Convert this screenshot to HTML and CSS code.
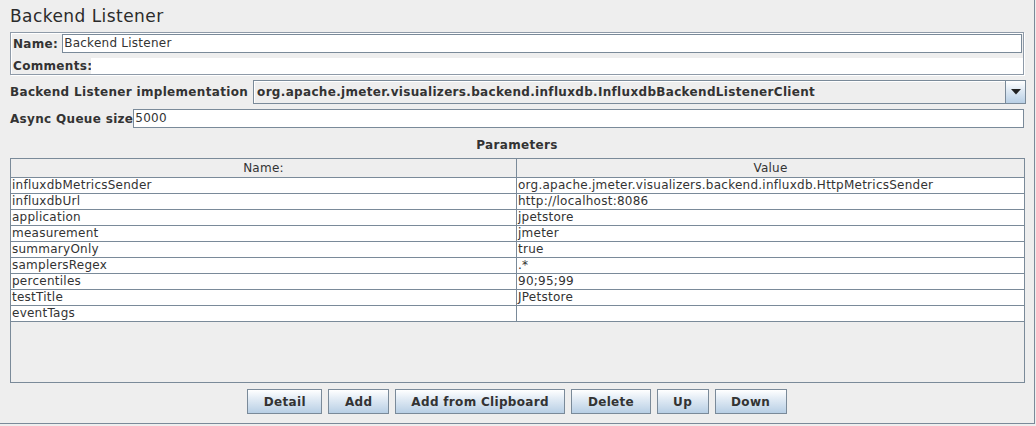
FILE: index.html
```html
<!DOCTYPE html>
<html>
<head>
<meta charset="utf-8">
<link rel="stylesheet" href="styles.css">
</head>
<body>
<div class="frame">
  <div class="title">Backend Listener</div>
  <div class="namepanel">
    <div class="nrow">
      <span class="lbl">Name:</span>
      <div class="field">Backend Listener</div>
    </div>
    <div class="crow">
      <span class="lbl">Comments:</span>
      <div class="area"></div>
    </div>
  </div>
  <div class="implrow">
    <span class="lbl">Backend Listener implementation</span>
    <div class="combo">
      <span class="combo-text">org.apache.jmeter.visualizers.backend.influxdb.InfluxdbBackendListenerClient</span>
      <div class="combo-btn">
        <svg width="10" height="6" viewBox="0 0 10 6"><path d="M0 0H10L5 5.5Z" fill="#222"/></svg>
      </div>
    </div>
  </div>
  <div class="qrow">
    <span class="lbl">Async Queue size</span>
    <div class="field">5000</div>
  </div>
  <div class="params">Parameters</div>
  <div class="tbl">
    <div class="thead">
      <div class="c1">Name:</div>
      <div class="c2">Value</div>
    </div>
    <div class="tr"><div class="c1">influxdbMetricsSender</div><div class="c2">org.apache.jmeter.visualizers.backend.influxdb.HttpMetricsSender</div></div>
    <div class="tr"><div class="c1">influxdbUrl</div><div class="c2">http://localhost:8086</div></div>
    <div class="tr"><div class="c1">application</div><div class="c2">jpetstore</div></div>
    <div class="tr"><div class="c1">measurement</div><div class="c2">jmeter</div></div>
    <div class="tr"><div class="c1">summaryOnly</div><div class="c2">true</div></div>
    <div class="tr"><div class="c1">samplersRegex</div><div class="c2">.*</div></div>
    <div class="tr"><div class="c1">percentiles</div><div class="c2">90;95;99</div></div>
    <div class="tr"><div class="c1">testTitle</div><div class="c2">JPetstore</div></div>
    <div class="tr"><div class="c1">eventTags</div><div class="c2"></div></div>
  </div>
  <div class="buttons">
    <button class="btn">Detail</button>
    <button class="btn">Add</button>
    <button class="btn">Add from Clipboard</button>
    <button class="btn">Delete</button>
    <button class="btn">Up</button>
    <button class="btn">Down</button>
  </div>
</div>
</body>
</html>
```
FILE: styles.css
```css
html, body {
  margin: 0;
  padding: 0;
  background: #eeeeee;
}
body {
  font-family: "DejaVu Sans", sans-serif;
  color: #333333;
  font-size: 12px;
  letter-spacing: 0.25px;
}
.frame {
  width: 1035px;
  height: 424px;
  box-sizing: border-box;
  border-right: 1px solid #7a8a99;
  border-bottom: 1px solid #7a8a99;
  padding: 0 10px 0 10px;
  display: flex;
  flex-direction: column;
}
.title {
  height: 32px;
  box-sizing: border-box;
  padding-top: 6px;
  font-size: 17px;
  line-height: 20px;
  letter-spacing: 0.45px;
  color: #2b2b2b;
}
.lbl {
  font-weight: bold;
  white-space: nowrap;
  letter-spacing: 0.32px;
}
.namepanel {
  height: 43px;
  box-sizing: border-box;
  border: 1px solid #8e9aa8;
  box-shadow: inset 1px 1px 0 #ffffff, 1px 1px 0 #ffffff;
  padding: 1px 1px 0 2px;
  display: flex;
  flex-direction: column;
}
.nrow {
  display: flex;
  align-items: center;
  height: 19px;
  gap: 4px;
}
.field {
  flex: 1;
  height: 19px;
  box-sizing: border-box;
  border: 1px solid #7a8a99;
  background: #ffffff;
  line-height: 17px;
  padding-left: 1px;
}
.crow {
  display: flex;
  align-items: center;
  margin-top: 5px;
  height: 16px;
  gap: 0;
}
.area {
  flex: 1;
  height: 16px;
  background: #ffffff;
  margin-right: -1px;
  margin-left: -1px;
}
.implrow {
  display: flex;
  align-items: center;
  margin-top: 5px;
  height: 24px;
  gap: 5px;
}
.combo {
  flex: 1;
  height: 24px;
  box-sizing: border-box;
  border: 1px solid #7a8a99;
  background: #eeeeee;
  box-shadow: inset 1px 1px 0 #ffffff;
  display: flex;
  margin-right: -2px;
}
.combo-text {
  flex: 1;
  font-weight: bold;
  line-height: 22px;
  padding-left: 3px;
  letter-spacing: 0.32px;
  white-space: nowrap;
  overflow: hidden;
}
.combo-btn {
  width: 19px;
  border-left: 1px solid #7a8a99;
  background: linear-gradient(#ffffff, #dde8f3 45%, #b8cfe5);
  display: flex;
  align-items: center;
  justify-content: center;
}
.qrow {
  display: flex;
  align-items: center;
  margin-top: 5px;
  height: 19px;
}
.params {
  height: 30px;
  box-sizing: border-box;
  padding-top: 10px;
  text-align: center;
  font-weight: bold;
  line-height: 14px;
  letter-spacing: 0.32px;
}
.tbl {
  height: 225px;
  box-sizing: border-box;
  border: 1px solid #7a8a99;
  background: #eeeeee;
  margin-right: -1px;
}
.thead {
  display: flex;
  height: 19px;
  box-sizing: border-box;
  border-bottom: 1px solid #7a8a99;
  line-height: 18px;
  text-align: center;
}
.tr {
  display: flex;
  height: 16px;
  box-sizing: border-box;
  border-bottom: 1px solid #7a8a99;
  background: #ffffff;
  line-height: 15px;
}
.c1 {
  width: 505px;
  padding-left: 1px;
  box-sizing: border-box;
  white-space: nowrap;
}
.c2 {
  flex: 1;
  border-left: 1px solid #7a8a99;
  padding-left: 1px;
  white-space: nowrap;
}
.thead .c1, .thead .c2 {
  padding-left: 0;
}
.buttons {
  display: flex;
  justify-content: center;
  gap: 6px;
  margin-top: 6px;
}
.btn {
  height: 25px;
  box-sizing: border-box;
  border: 1px solid #7a8a99;
  border-radius: 0;
  background: linear-gradient(#ffffff, #dde8f3 45%, #b8cfe5);
  font-family: "DejaVu Sans", sans-serif;
  font-weight: bold;
  font-size: 12px;
  letter-spacing: 0.32px;
  color: #333333;
  padding: 0 15.5px;
  margin: 0;
}
```
